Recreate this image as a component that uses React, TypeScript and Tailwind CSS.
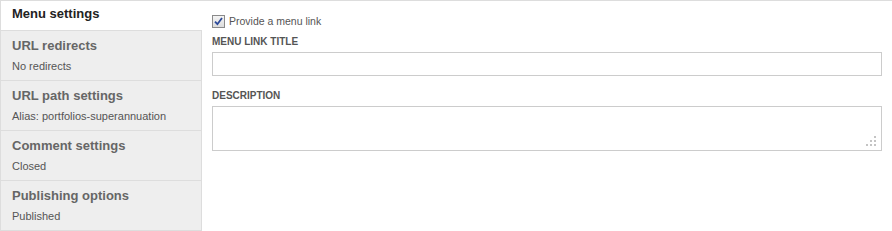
const tabs = [
  { title: "URL redirects", summary: "No redirects" },
  { title: "URL path settings", summary: "Alias: portfolios-superannuation" },
  { title: "Comment settings", summary: "Closed" },
  { title: "Publishing options", summary: "Published" },
];

function Grip() {
  return (
    <svg width="11" height="11" viewBox="0 0 11 11" className="absolute bottom-[3px] right-[4px]">
      {[
        [8, 0],
        [4, 4],
        [8, 4],
        [0, 8],
        [4, 8],
        [8, 8],
      ].map(([x, y]) => (
        <rect key={`${x}-${y}`} x={x} y={y} width="2" height="2" fill="#c4c4c4" />
      ))}
    </svg>
  );
}

export default function App() {
  return (
    <div className="flex h-[231px] w-[892px] border-t border-[#dddddd] bg-white font-['Liberation_Sans',Arial,sans-serif]">
      <ul className="flex w-[202px] shrink-0 flex-col self-start border-b border-l border-[#dddddd]">
        <li className="h-[29px] bg-white pl-[11px] pt-[4px] text-[13px] font-bold leading-[17px] text-[#222]">
          Menu settings
        </li>
        {tabs.map((tab) => (
          <li
            key={tab.title}
            className="h-[50px] border-r border-t border-[#dddddd] bg-[#eeeeee] pl-[11px] pt-[6px]"
          >
            <div className="text-[13px] font-bold leading-[17px] text-[#666]">{tab.title}</div>
            <div className="mt-[6px] text-[11px] leading-[13px] text-[#555]">{tab.summary}</div>
          </li>
        ))}
      </ul>

      <div className="flex-1 pl-[10px] pr-[10px] pt-[13px]">
        <label className="flex items-center gap-[4px] text-[10.5px] leading-[14px] text-[#555]">
          <span className="flex h-[13px] w-[13px] items-center justify-center border border-[#8a8a8a] bg-gradient-to-b from-[#f4f4f4] to-[#dcdcdc]">
            <svg width="9" height="9" viewBox="0 0 9 9">
              <path d="M1 4.6 L3.4 7.2 L8 1" fill="none" stroke="#2c4a9a" strokeWidth="1.8" />
            </svg>
          </span>
          Provide a menu link
        </label>

        <div className="mt-[8px] text-[10px] font-bold uppercase leading-[12px] text-[#555]">
          Menu link title
        </div>
        <input
          type="text"
          className="mt-[4px] block h-[24px] w-[670px] border border-[#cccccc] bg-white px-1 text-[12px] outline-none"
        />

        <div className="mt-[14px] text-[10px] font-bold uppercase leading-[12px] text-[#555]">
          Description
        </div>
        <div className="relative mt-[4px] h-[45px] w-[670px] border border-[#cccccc] bg-white">
          <Grip />
        </div>
      </div>
    </div>
  );
}
